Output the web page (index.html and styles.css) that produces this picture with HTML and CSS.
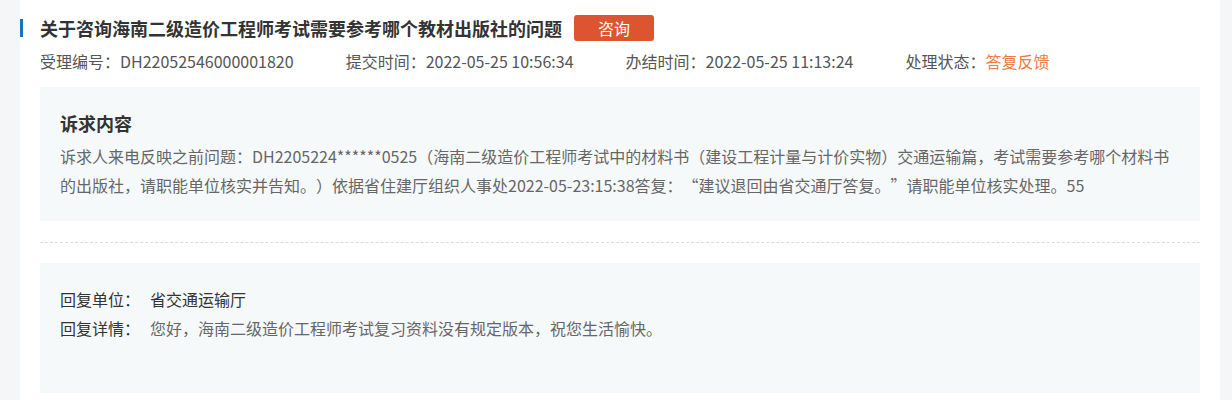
FILE: index.html
```html
<!DOCTYPE html>
<html lang="zh-CN">
<head>
<meta charset="utf-8">
<link rel="stylesheet" href="styles.css">
</head>
<body>
<div class="page">
  <div class="card">
    <div class="title-row">
      <h1 class="title">关于咨询海南二级造价工程师考试需要参考哪个教材出版社的问题</h1>
      <span class="badge">咨询</span>
    </div>
    <div class="meta">
      <span class="meta-item">受理编号：DH22052546000001820</span>
      <span class="meta-item">提交时间：2022-05-25 10:56:34</span>
      <span class="meta-item">办结时间：2022-05-25 11:13:24</span>
      <span class="meta-item">处理状态：<span class="status">答复反馈</span></span>
    </div>
    <div class="box box-appeal">
      <h2 class="box-title">诉求内容</h2>
      <p class="box-text">诉求人来电反映之前问题：DH2205224******0525（海南二级造价工程师考试中的材料书（建设工程计量与计价实物）交通运输篇，考试需要参考哪个材料书的出版社，请职能单位核实并告知。）依据省住建厅组织人事处2022-05-23:15:38答复：“建议退回由省交通厅答复。”请职能单位核实处理。55</p>
    </div>
    <div class="divider"></div>
    <div class="box box-reply">
      <div class="reply-row">
        <span class="reply-label">回复单位：</span>
        <span class="reply-unit">省交通运输厅</span>
      </div>
      <div class="reply-row">
        <span class="reply-label">回复详情：</span>
        <span class="reply-detail">您好，海南二级造价工程师考试复习资料没有规定版本，祝您生活愉快。</span>
      </div>
    </div>
  </div>
</div>
</body>
</html>
```
FILE: styles.css
```css
* { box-sizing: border-box; }
html, body {
  margin: 0;
  padding: 0;
  background: #f4f6f8;
  font-family: "Noto Sans CJK SC", "Noto Sans", sans-serif;
  text-spacing-trim: space-all;
}
.page {
  padding: 0 12px 0 20px;
}
.card {
  background: #fff;
  padding: 14px 20px 20px 20px;
  min-height: 420px;
}
.title-row {
  display: flex;
  align-items: center;
  position: relative;
  height: 28px;
}
.title-row::before {
  content: "";
  position: absolute;
  left: -20px;
  top: 5px;
  width: 3px;
  height: 18px;
  background: #1a74b8;
}
.title {
  margin: 0;
  font-size: 18px;
  font-weight: 700;
  color: #333;
  line-height: 28px;
}
.badge {
  margin-left: 12px;
  width: 80px;
  height: 26px;
  background: #dd5530;
  color: #fff;
  border-radius: 3px;
  font-size: 16px;
  line-height: 26px;
  text-align: center;
}
.meta {
  display: flex;
  margin-top: 5px;
  font-size: 16px;
  line-height: 28px;
  color: #555;
}
.meta-item {
  margin-right: 52px;
}
.status {
  color: #ec7a45;
}
.box {
  background: #f6f9fa;
  padding: 20px 20px 21px 20px;
}
.box-appeal {
  margin-top: 12px;
}
.box-title {
  margin: 0;
  font-size: 18px;
  font-weight: 700;
  color: #333;
  line-height: 32px;
}
.box-text {
  margin: 3px 0 0 0;
  font-size: 16px;
  line-height: 29px;
  color: #666;
}
.divider {
  margin: 21px 0 20px 0;
  border-top: 1px dashed #dcdcdc;
}
.box-reply {
  padding: 22px 20px 50px 20px;
}
.reply-row {
  display: flex;
  font-size: 16px;
  line-height: 29px;
}
.reply-label {
  width: 90px;
  flex: none;
  color: #333;
}
.reply-unit {
  color: #333;
}
.reply-detail {
  color: #666;
}
```
